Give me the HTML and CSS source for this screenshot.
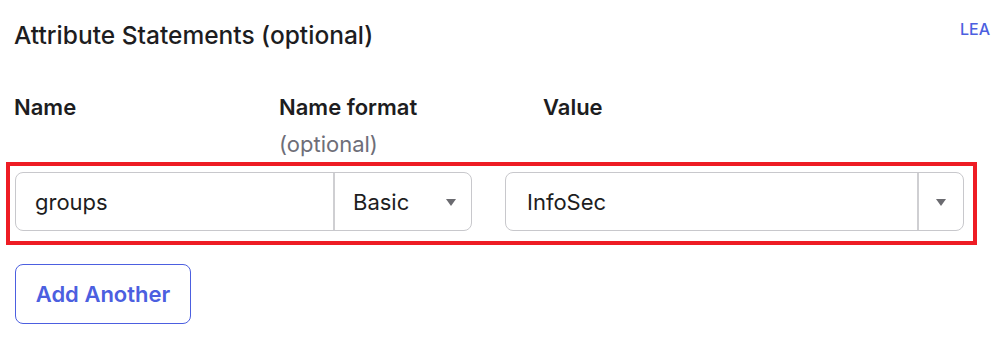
FILE: index.html
```html
<!DOCTYPE html>
<html lang="en">
<head>
<meta charset="utf-8">
<title>Attribute Statements</title>
<link rel="stylesheet" href="styles.css">
</head>
<body>
<div class="page">
  <div class="header">
    <h2 class="title">Attribute Statements (optional)</h2>
    <a class="learn" href="#">LEA</a>
  </div>

  <div class="cols">
    <div class="col-label">Name</div>
    <div class="col-label">Name format<span class="sub">(optional)</span></div>
    <div class="col-label">Value</div>
  </div>

  <div class="highlight">
    <div class="group name-group">
      <div class="field name-field">groups</div>
      <div class="field select basic">
        <span>Basic</span>
        <span class="caret"></span>
      </div>
    </div>
    <div class="group value-group">
      <div class="field value-field">InfoSec</div>
      <div class="field toggle"><span class="caret"></span></div>
    </div>
  </div>

  <button class="add" type="button">Add Another</button>
</div>
</body>
</html>
```

FILE: styles.css
```css
* { box-sizing: border-box; }

html, body {
  margin: 0;
  padding: 0;
  background: #ffffff;
  overflow: hidden;
}

body {
  font-family: Inter, "Noto Sans", "Liberation Sans", sans-serif;
  color: #1d1d21;
}

.page {
  padding: 20px 0 0 14px;
  width: 991px;
}

.header {
  display: flex;
  align-items: flex-start;
}

.title {
  flex: 0 0 946px;
  margin: 0;
  font-size: 24.5px;
  line-height: 30px;
  font-weight: 500;
  color: #1d1d21;
}

.learn {
  flex: 0 0 auto;
  margin-top: -1px;
  white-space: nowrap;
  font-size: 16px;
  line-height: 20px;
  font-weight: 500;
  color: #4c5fe0;
  text-decoration: none;
}

.cols {
  margin-top: 41px;
  display: grid;
  grid-template-columns: 265px 264px auto;
}

.col-label {
  font-size: 22px;
  line-height: 32px;
  font-weight: 600;
  color: #1d1d21;
}

.sub {
  display: block;
  margin-top: 5px;
  font-weight: 400;
  color: #6e6e78;
}

.highlight {
  margin: 2px 0 0 -8px;
  width: 971px;
  border: 4px solid #ee1c24;
  padding: 6px 9px 10px 5px;
  display: flex;
  gap: 33px;
}

.group {
  display: flex;
  height: 59px;
  border: 1px solid #c8c8cc;
  border-radius: 8px;
  background: #fff;
}

.name-group { width: 457px; }
.value-group { width: 459px; }

.field {
  display: flex;
  align-items: center;
  font-size: 22px;
  color: #1d1d21;
}

.name-field {
  width: 317px;
  padding-left: 19px;
}

.basic {
  flex: 1;
  border-left: 2px solid #cfcfd2;
  padding: 0 15px 0 18px;
  justify-content: space-between;
}

.value-field {
  flex: 1;
  padding-left: 21px;
}

.toggle {
  width: 46px;
  border-left: 2px solid #cfcfd2;
  justify-content: center;
}

.caret {
  width: 0;
  height: 0;
  border-left: 5px solid transparent;
  border-right: 5px solid transparent;
  border-top: 7px solid #6b6b70;
  margin-top: 2px;
}

.add {
  margin-top: 19px;
  margin-left: 1px;
  width: 176px;
  height: 60px;
  border: 1.5px solid #4c5fe0;
  border-radius: 8px;
  background: #fff;
  font-family: Inter, "Noto Sans", "Liberation Sans", sans-serif;
  font-size: 22px;
  font-weight: 600;
  color: #4c5fe0;
  padding: 0;
}
```
